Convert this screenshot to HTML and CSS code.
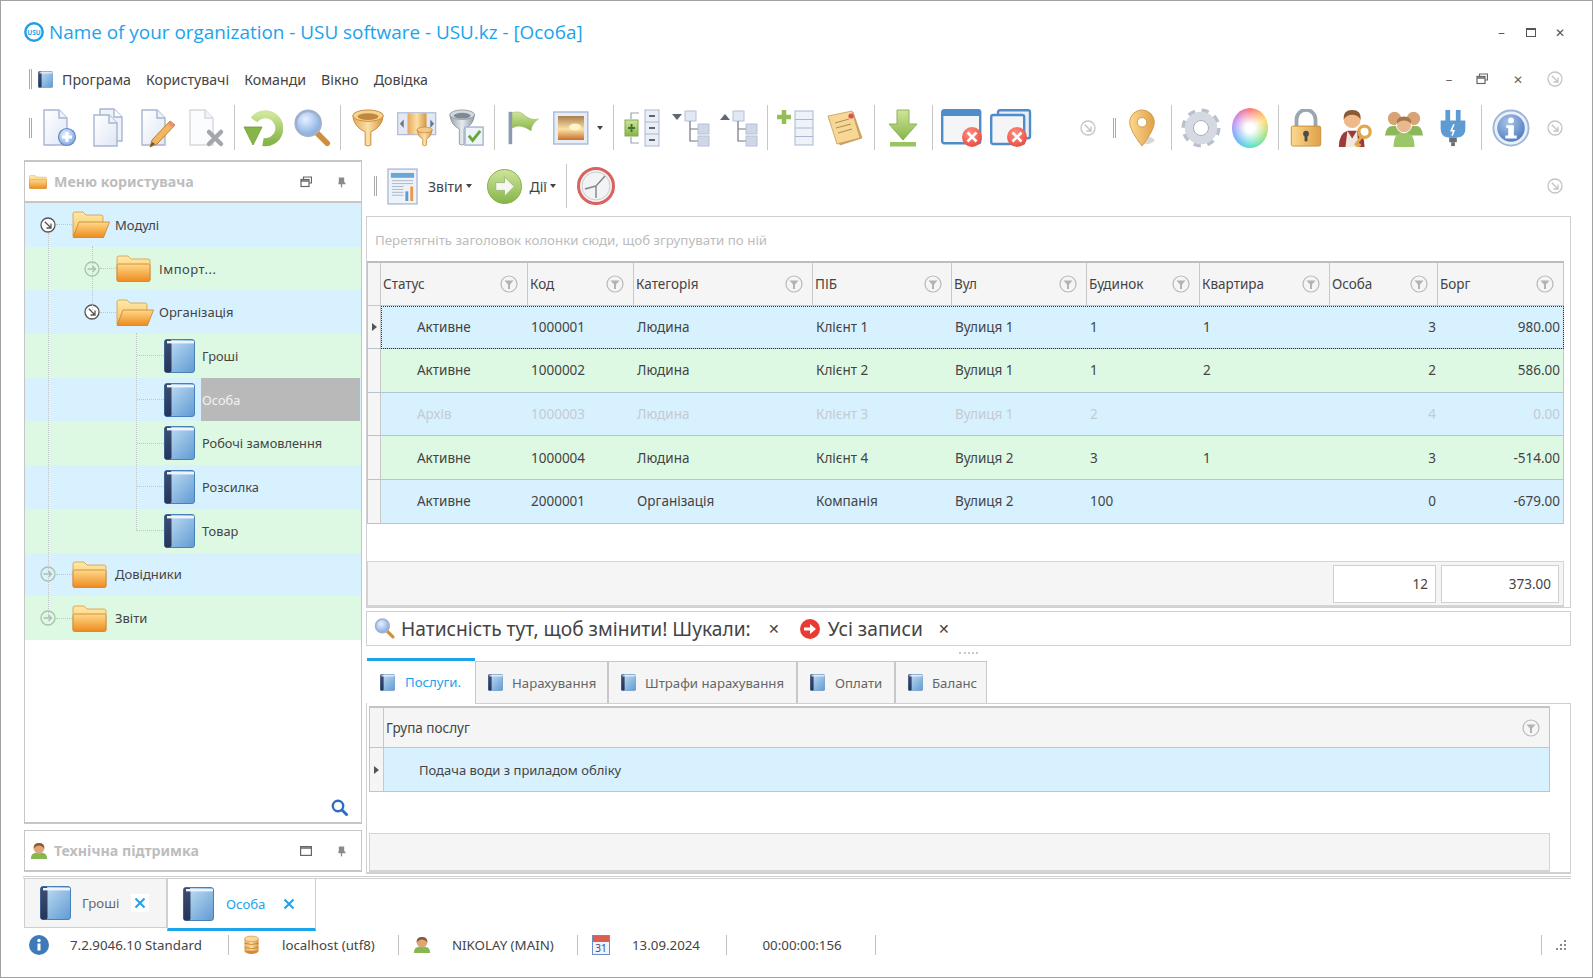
FILE: index.html
```html
<!DOCTYPE html>
<html lang="uk">
<head>
<meta charset="utf-8">
<title>USU</title>
<link rel="stylesheet" href="styles.css">
</head>
<body>
<svg class="sprite" xmlns="http://www.w3.org/2000/svg">
<defs>
<linearGradient id="gBook" x1="0" y1="0" x2="1" y2="1"><stop offset="0" stop-color="#c9e2f6"/><stop offset="1" stop-color="#5f9bd3"/></linearGradient>
<linearGradient id="gSpine" x1="0" y1="0" x2="0" y2="1"><stop offset="0" stop-color="#3e4f74"/><stop offset="1" stop-color="#26355a"/></linearGradient>
<linearGradient id="gFolderB" x1="0" y1="0" x2="0" y2="1"><stop offset="0" stop-color="#ffe9a8"/><stop offset="1" stop-color="#f5c15c"/></linearGradient>
<linearGradient id="gFolderF" x1="0" y1="0" x2="0" y2="1"><stop offset="0" stop-color="#ffd98a"/><stop offset="1" stop-color="#ee8b1d"/></linearGradient>
<linearGradient id="gPage" x1="0" y1="0" x2="1" y2="1"><stop offset="0" stop-color="#fff"/><stop offset="1" stop-color="#dfe7f4"/></linearGradient>
<linearGradient id="gGold" x1="0" y1="0" x2="1" y2="0"><stop offset="0" stop-color="#e6a95a"/><stop offset=".5" stop-color="#fbe0a6"/><stop offset="1" stop-color="#d8943f"/></linearGradient>
<linearGradient id="gGray" x1="0" y1="0" x2="1" y2="0"><stop offset="0" stop-color="#9aa4ad"/><stop offset=".5" stop-color="#e6eaee"/><stop offset="1" stop-color="#8f99a3"/></linearGradient>
<linearGradient id="gGreen" x1="0" y1="0" x2="0" y2="1"><stop offset="0" stop-color="#cfe59a"/><stop offset="1" stop-color="#86b548"/></linearGradient>
<linearGradient id="gSun" x1="0" y1="0" x2="0" y2="1"><stop offset="0" stop-color="#a97f4f"/><stop offset=".55" stop-color="#fbe2a6"/><stop offset="1" stop-color="#c8702a"/></linearGradient>
<radialGradient id="gLens" cx=".4" cy=".35" r=".7"><stop offset="0" stop-color="#e6f1ff"/><stop offset="1" stop-color="#7ea7e0"/></radialGradient>
<radialGradient id="gInfo" cx=".4" cy=".3" r=".8"><stop offset="0" stop-color="#a9c4ea"/><stop offset="1" stop-color="#4a76bd"/></radialGradient>
<radialGradient id="gRed" cx=".4" cy=".3" r=".8"><stop offset="0" stop-color="#ff8d80"/><stop offset="1" stop-color="#e6483a"/></radialGradient>
<linearGradient id="gPin" x1="0" y1="0" x2="1" y2="0"><stop offset="0" stop-color="#fbd98f"/><stop offset="1" stop-color="#e0a046"/></linearGradient>

<symbol id="book" viewBox="0 0 31 34"><rect x=".5" y=".5" width="30" height="33" rx="2.5" fill="url(#gBook)" stroke="#4a80b8"/><rect x=".5" y=".5" width="7" height="33" rx="2" fill="url(#gSpine)"/><rect x="3" y="2" width="27" height="2.4" fill="#eef4f9"/></symbol>
<symbol id="fopen" viewBox="0 0 38 27"><path d="M1 25V3q0-2 2-2h8l3 3h15q2 0 2 2v6H8z" fill="url(#gFolderB)" stroke="#d59a3f" stroke-width=".8"/><path d="M7 11h30.5l-6 15.5H1z" fill="url(#gFolderF)" stroke="#c9822c" stroke-width=".8"/></symbol>
<symbol id="fclosed" viewBox="0 0 35 27"><path d="M1 25V3q0-2 2-2h9l3 3h17q2 0 2 2v19z" fill="url(#gFolderB)" stroke="#d59a3f" stroke-width=".8"/><rect x="1" y="9" width="33" height="17.5" rx="1.5" fill="url(#gFolderF)" stroke="#c9822c" stroke-width=".8"/></symbol>
<symbol id="page" viewBox="0 0 40 40"><path d="M4 2h15l8 8v27H4z" fill="url(#gPage)" stroke="#a8b5d2" stroke-width="1.4"/><path d="M19 2v8h8" fill="#eef2f9" stroke="#a8b5d2" stroke-width="1.4"/></symbol>
<symbol id="docnew" viewBox="0 0 40 40"><use href="#page"/><circle cx="27" cy="29" r="8.5" fill="url(#gLens)" stroke="#5f88c6" stroke-width="1.2"/><path d="M27 24v10M22 29h10" stroke="#fff" stroke-width="3"/></symbol>
<symbol id="doccopy" viewBox="0 0 40 40"><path d="M11 1h14l8 8v24H11z" fill="#eef2f9" stroke="#a8b5d2" stroke-width="1.4"/><path d="M25 1v8h8" fill="#fff" stroke="#a8b5d2" stroke-width="1.4"/><path d="M5 7h15l8 8v23H5z" fill="url(#gPage)" stroke="#a8b5d2" stroke-width="1.4"/><path d="M20 7v8h8" fill="#eef2f9" stroke="#a8b5d2" stroke-width="1.4"/></symbol>
<symbol id="docedit" viewBox="0 0 40 40"><use href="#page"/><path d="M32 13l5 4-18 19-7 3 2-7z" fill="#f1b65f" stroke="#c47f2c"/><path d="M32 13l5 4-2 3-5-4z" fill="#e88e84"/><path d="M12 39l2-5 3 2z" fill="#555"/></symbol>
<symbol id="docdel" viewBox="0 0 40 40"><path d="M4 2h15l8 8v27H4z" fill="#fbfcfd" stroke="#d5d8dd" stroke-width="1.4"/><path d="M19 2v8h8" fill="#f3f4f6" stroke="#d5d8dd" stroke-width="1.4"/><path d="M23 24l12 12M35 24L23 36" stroke="#a3a6aa" stroke-width="4.5" stroke-linecap="round"/></symbol>
<symbol id="refresh" viewBox="0 0 40 40"><path d="M11 12A14 14 0 1 1 20 34" fill="none" stroke="url(#gGreen)" stroke-width="8"/><path d="M1 19h18L10 37z" fill="#86b548" stroke="#6b9b36" stroke-width=".8"/></symbol>
<symbol id="lens" viewBox="0 0 40 40"><path d="M25 25l11 11" stroke="#cf8f3d" stroke-width="6" stroke-linecap="round"/><circle cx="16" cy="15" r="13" fill="url(#gLens)" stroke="#9fb1cc" stroke-width="3"/></symbol>
<symbol id="funnel" viewBox="0 0 40 40"><path d="M4 7q1 12 13 17v14q3 2 6 0V24Q35 19 36 7z" fill="url(#gGold)" stroke="#c98a3a"/><ellipse cx="20" cy="7" rx="16" ry="6" fill="#f6d28f" stroke="#c98a3a"/><ellipse cx="20" cy="8" rx="11" ry="3.5" fill="#c2873f"/></symbol>
<symbol id="colfilter" viewBox="0 0 42 40"><rect x=".7" y="4" width="40" height="23" fill="#e3e9f4" stroke="#aab7d3" stroke-width="1.2"/><rect x="11" y="4.5" width="20" height="22" fill="url(#gGold)"/><path d="M7 11v9l-4-4.500zM35 11v9l4-4.500z" fill="#6b7488"/><path d="M21 22q1 7 6 10v6q2 1.500 4 0v-6q5-3 6-10z" fill="url(#gGold)" stroke="#c98a3a" stroke-width=".8"/><ellipse cx="29" cy="22" rx="8" ry="3" fill="#f3c98a" stroke="#c98a3a" stroke-width=".8"/></symbol>
<symbol id="gfunnel" viewBox="0 0 40 40"><path d="M3 6q1 11 10 15v16q3 2 5 0V21Q28 17 29 6z" fill="url(#gGray)" stroke="#828c96" stroke-width=".8"/><ellipse cx="16" cy="6" rx="13" ry="5" fill="#d5dade" stroke="#828c96" stroke-width=".8"/><ellipse cx="16" cy="7" rx="9" ry="3" fill="#7f8994"/><rect x="19" y="19" width="19" height="19" fill="#eef3fa" stroke="#9fb0cf" stroke-width="1.4"/><path d="M23 28l4 5 8-10" fill="none" stroke="#67a83a" stroke-width="3"/></symbol>
<symbol id="flag" viewBox="0 0 36 40"><rect x="2" y="2" width="4" height="36" fill="#8a9ab0"/><path d="M6 3q9-3 15 4 7 5 14 3-8 6-8 13-6-4-11-5-5-1-10 2z" fill="url(#gGreen)" stroke="#8db356" stroke-width=".6"/></symbol>
<symbol id="picture" viewBox="0 0 36 36"><rect x=".8" y="2" width="34" height="32" fill="#e7edf6" stroke="#aab7d3" stroke-width="1.4"/><rect x="5" y="6" width="26" height="24" fill="url(#gSun)"/><ellipse cx="22" cy="17" rx="6" ry="3.500" fill="#fff3c8"/></symbol>
<symbol id="treeadd" viewBox="0 0 38 38"><rect x="22" y="1" width="14" height="36" fill="#e9eef7" stroke="#aab7d3"/><path d="M22 13h14M22 25h14" stroke="#aab7d3"/><path d="M26 7h6M26 19h6M26 31h6" stroke="#60656e" stroke-width="1.8"/><path d="M16 4H8v6M16 34H8v-6" fill="none" stroke="#9ba3ad" stroke-width="1.2"/><rect x="2" y="11" width="13" height="16" fill="url(#gGreen)" stroke="#86aa4f"/><path d="M8.500 15v8M5 19h7" stroke="#46752a" stroke-width="2"/></symbol>
<symbol id="treecol" viewBox="0 0 38 38"><path d="M0 5h10l-5 6z" fill="#606672"/><rect x="13" y="2" width="11" height="10" fill="#e2e8f3" stroke="#b6c1d6"/><path d="M18 12v20h8M18 20h8" fill="none" stroke="#6f7580" stroke-width="1.2"/><rect x="26" y="15" width="11" height="10" fill="#cfd7e6" stroke="#b6c1d6"/><rect x="26" y="27" width="11" height="10" fill="#cfd7e6" stroke="#b6c1d6"/></symbol>
<symbol id="treeexp" viewBox="0 0 38 38"><path d="M0 11h10L5 5z" fill="#606672"/><rect x="13" y="2" width="11" height="10" fill="#e2e8f3" stroke="#b6c1d6"/><path d="M18 12v20h8M18 20h8" fill="none" stroke="#6f7580" stroke-width="1.2"/><rect x="26" y="15" width="11" height="10" fill="#cfd7e6" stroke="#b6c1d6"/><rect x="26" y="27" width="11" height="10" fill="#cfd7e6" stroke="#b6c1d6"/></symbol>
<symbol id="addrows" viewBox="0 0 38 38"><rect x="18" y="2" width="18" height="34" fill="#eef2f9" stroke="#aab7d3"/><path d="M18 10.500h18M18 19h18M18 27.500h18" stroke="#aab7d3"/><path d="M7 1v14M0 8h14" stroke="#94bc57" stroke-width="4.500"/></symbol>
<symbol id="note" viewBox="0 0 38 38"><path d="M3 10l24-7 9 26-22 7z" fill="#d9a65a" stroke="#b98a44" stroke-width=".6"/><path d="M2 7l24-5 8 27-23 6z" fill="#f6d796" stroke="#c79c58" stroke-width=".8"/><path d="M9 14l14-4M10 19l15-4M12 24l14-4" stroke="#b08a50" stroke-width="1"/><circle cx="25" cy="7" r="2.600" fill="#d9505a"/></symbol>
<symbol id="download" viewBox="0 0 30 38"><path d="M9 1h12v14h8L15 31 1 15h8z" fill="url(#gGreen)" stroke="#8eb15a"/><rect x="2" y="33" width="26" height="4.500" fill="#9cc361"/></symbol>
<symbol id="winx" viewBox="0 0 42 38"><rect x="1.200" y="1.200" width="38" height="33" rx="2" fill="#f4f5f7" stroke="#4f8cc9" stroke-width="2.400"/><rect x="1" y="1" width="38" height="6" fill="#4f8cc9"/><circle cx="31" cy="28" r="10" fill="url(#gRed)"/><path d="M26.500 23.500l9 9M35.500 23.500l-9 9" stroke="#fff" stroke-width="2.600"/></symbol>
<symbol id="winx2" viewBox="0 0 42 38"><rect x="8" y="1.200" width="32" height="28" rx="2" fill="#e9f0f7" stroke="#4f8cc9" stroke-width="2.400"/><rect x="1.200" y="6" width="33" height="29" rx="2" fill="#f4f5f7" stroke="#4f8cc9" stroke-width="2.400"/><circle cx="27" cy="28" r="10" fill="url(#gRed)"/><path d="M22.500 23.500l9 9M31.500 23.500l-9 9" stroke="#fff" stroke-width="2.600"/></symbol>
<symbol id="carrow" viewBox="0 0 16 16"><circle cx="8" cy="8" r="7" fill="#fff" stroke="currentColor" stroke-width="1.300"/><path d="M4.800 4.800l6 6M11 6.500V11H6.500" fill="none" stroke="currentColor" stroke-width="1.300"/></symbol>
<symbol id="cright" viewBox="0 0 16 16"><circle cx="8" cy="8" r="7" fill="none" stroke="currentColor" stroke-width="1.300"/><path d="M3.500 8h8M8.500 5l3 3-3 3" fill="none" stroke="currentColor" stroke-width="1.300"/></symbol>
<symbol id="mappin" viewBox="0 0 30 40"><ellipse cx="19" cy="33" rx="9" ry="4" fill="#d8d8d8"/><path d="M15 39Q2 22 2 14a13 13 0 0 1 26 0q0 8-13 25z" fill="url(#gPin)" stroke="#d39a4b"/><circle cx="15" cy="14" r="5" fill="#fff" stroke="#d39a4b"/></symbol>
<symbol id="gear" viewBox="0 0 38 40"><circle cx="19" cy="20" r="17" fill="none" stroke="#b9c1cd" stroke-width="5" stroke-dasharray="7 6.350"/><circle cx="19" cy="20" r="12" fill="none" stroke="#d5dae2" stroke-width="8.500"/><circle cx="19" cy="20" r="7.500" fill="#fff" stroke="#a4adba"/></symbol>
<symbol id="lock" viewBox="0 0 34 40"><path d="M7 19V11a10 10 0 0 1 20 0v8" fill="none" stroke="#9ca6b0" stroke-width="4"/><rect x="1.500" y="18" width="31" height="21" rx="2" fill="url(#gPin)" stroke="#c4903f"/><circle cx="17" cy="26" r="3" fill="#4b4b4b"/><rect x="15.500" y="26" width="3" height="8" fill="#4b4b4b"/></symbol>
<symbol id="userkey" viewBox="0 0 38 40"><path d="M2 40q0-14 9-17h10q8 3 8 17z" fill="#9c3b3b"/><path d="M11 23l5 8 5-8 2 17H9z" fill="#efe9e0"/><circle cx="16" cy="11" r="9" fill="#efb98a"/><path d="M7 11Q6 1 16 1t9 10q-3-5-9-5t-9 5z" fill="#8a5a33"/><circle cx="29" cy="24" r="6" fill="none" stroke="#e0a94e" stroke-width="3.500"/><path d="M26 29l-6 8 2 2 3-2" fill="none" stroke="#e0a94e" stroke-width="3"/></symbol>
<symbol id="users" viewBox="0 0 40 40"><path d="M0 28q1-10 8-10h4q6 0 7 10zM21 28q1-10 8-10h4q6 0 7 10z" fill="#8cb85a"/><circle cx="10" cy="10" r="7" fill="#d7a377"/><circle cx="30" cy="10" r="7" fill="#d7a377"/><path d="M9 40q0-14 8-15h6q8 1 8 15z" fill="#9cc66a"/><circle cx="20" cy="17" r="8" fill="#e8b98d" stroke="#fff"/><path d="M12 16q0-8 8-8t8 8q-3-4-8-4t-8 4z" fill="#a4764a"/></symbol>
<symbol id="person" viewBox="0 0 20 20"><path d="M1 19q0-7 6-7h6q6 0 6 7z" fill="#86b84f"/><circle cx="10" cy="7" r="6" fill="#dca678"/><path d="M4 7q0-6 6-6t6 6q-3-3-6-3T4 7z" fill="#8a5a33"/></symbol>
<symbol id="plug" viewBox="0 0 30 40"><rect x="7" y="1" width="5" height="13" fill="#5f9bd3"/><rect x="18" y="1" width="5" height="13" fill="#5f9bd3"/><path d="M2 12h26v9q0 8-8 9H10q-8-1-8-9z" fill="#5f9bd3"/><path d="M16 16l-3 7h3l-2 5" fill="none" stroke="#fff" stroke-width="1.600"/><rect x="11" y="30" width="8" height="5" fill="#6a6f76"/><rect x="13" y="35" width="4" height="4" fill="#6a6f76"/></symbol>
<symbol id="info" viewBox="0 0 40 40"><circle cx="20" cy="20" r="18.500" fill="#eaf0f8" stroke="#9db5d8" stroke-width="2"/><circle cx="20" cy="20" r="14.500" fill="url(#gInfo)"/><circle cx="20" cy="12" r="3" fill="#fff"/><path d="M15 17h8v11h3v3H14v-3h3v-8h-2z" fill="#fff"/></symbol>
<symbol id="infoflat" viewBox="0 0 20 20"><circle cx="10" cy="10" r="10" fill="#3f7ab8"/><circle cx="10" cy="5.500" r="1.700" fill="#fff"/><rect x="8.500" y="8.500" width="3" height="7" fill="#fff"/></symbol>
<symbol id="report" viewBox="0 0 32 38"><rect x="1" y="1" width="30" height="36" fill="#eef3fa" stroke="#a6b6d2" stroke-width="1.300"/><rect x="4" y="5" width="24" height="5" fill="#6aa6d8"/><path d="M5 13h22M5 16h22M5 19h12M5 22h12M5 25h12M5 28h12" stroke="#a8b5c9" stroke-width="1"/><rect x="19" y="24" width="3" height="10" fill="#5f9bd3"/><rect x="24" y="19" width="3" height="15" fill="#e89a4c"/></symbol>
<symbol id="go" viewBox="0 0 36 36"><circle cx="18" cy="18" r="17.500" fill="url(#gGreen)" stroke="#86ad4f"/><path d="M9 14h9V8l10 10-10 10v-6H9z" fill="#f6f7f0" stroke="#9fb87e"/></symbol>
<symbol id="clock" viewBox="0 0 38 38"><circle cx="19" cy="19" r="17.500" fill="#f2f3f5" stroke="#d9645f" stroke-width="3"/><circle cx="19" cy="19" r="14" fill="none" stroke="#c9ccd2"/><path d="M19 19L28 9M19 19L8 22M19 19v12" stroke="#7f858e" stroke-width="1.400" fill="none"/></symbol>
<symbol id="filter" viewBox="0 0 18 18"><circle cx="9" cy="9" r="8" fill="#f5f5f5" stroke="#b9b9b9" stroke-width="1.200"/><path d="M4.500 5.500h9L10 9.500V14H8V9.500z" fill="#b3b3b3"/></symbol>
<symbol id="restore" viewBox="0 0 12 12"><path d="M3.500 3V1h8v6H9" fill="none" stroke="#666" stroke-width="1.200"/><rect x="1" y="3.500" width="8" height="7" fill="none" stroke="#666" stroke-width="1.200"/><path d="M1 5h8" stroke="#666" stroke-width="1.500"/></symbol>
<symbol id="pushpin" viewBox="0 0 10 12"><path d="M2 1h6v5l1.500 1.500v1h-8v-1L2 6z" fill="#8a8a8a"/><rect x="4.300" y="8" width="1.400" height="4" fill="#8a8a8a"/></symbol>
<symbol id="maxwin" viewBox="0 0 12 10"><rect x=".6" y=".6" width="10.800" height="8.800" fill="none" stroke="#666" stroke-width="1.200"/><path d="M.6 2h10.800" stroke="#666" stroke-width="1.500"/></symbol>
<symbol id="searchsmall" viewBox="0 0 17 17"><circle cx="7" cy="7" r="5.200" fill="none" stroke="#2c6fc2" stroke-width="2.400"/><path d="M11 11l4.500 4.500" stroke="#2c6fc2" stroke-width="3" stroke-linecap="round"/></symbol>
<symbol id="xmark" viewBox="0 0 12 12"><path d="M1.500 1.500l9 9M10.500 1.500l-9 9" stroke="#1ba3ec" stroke-width="2"/></symbol>
<symbol id="redgo" viewBox="0 0 20 20"><circle cx="10" cy="10" r="10" fill="#ea3b32"/><path d="M4 8.500h6V5l6 5-6 5v-3.500H4z" fill="#fff"/></symbol>
<symbol id="db" viewBox="0 0 16 20"><ellipse cx="8" cy="16" rx="7.500" ry="3.500" fill="#d08c3c"/><rect x=".5" y="3.500" width="15" height="12.500" fill="url(#gGold)"/><path d="M.5 8q7.500 3 15 0M.5 12.500q7.500 3 15 0" stroke="#c78533" fill="none"/><ellipse cx="8" cy="3.500" rx="7.500" ry="3" fill="#f9d89b" stroke="#c78533" stroke-width=".6"/></symbol>
<symbol id="cal" viewBox="0 0 18 20"><rect x=".5" y=".5" width="17" height="19" fill="#f0f3fa" stroke="#6f8cc8"/><rect x="1" y="1" width="16" height="6" fill="#d9604f"/></symbol>
<symbol id="logo" viewBox="0 0 20 20"><circle cx="10" cy="10" r="8.700" fill="#fff" stroke="#1f9fe8" stroke-width="2.400"/></symbol>
</defs>
</svg>

<div class="window">
  <header class="titlebar">
    <span class="logo"><svg class="ic-20"><use href="#logo"/></svg><span class="logo-text">USU</span></span>
    <span class="title-text">Name of your organization - USU software - USU.kz - [Особа]</span>
    <span class="win-buttons">
      <span class="wb">–</span>
      <span class="wb wb-max"></span>
      <span class="wb wb-x">✕</span>
    </span>
  </header>

  <nav class="menubar">
    <span class="grip"></span>
    <svg class="menu-book"><use href="#book"/></svg>
    <span class="menu-item">Програма</span>
    <span class="menu-item">Користувачі</span>
    <span class="menu-item">Команди</span>
    <span class="menu-item">Вікно</span>
    <span class="menu-item">Довідка</span>
    <span class="mdi-buttons">
      <span class="mdi-min">–</span>
      <svg class="ic-12"><use href="#restore"/></svg>
      <span class="mdi-x">✕</span>
      <svg class="ic-16 c-light"><use href="#carrow"/></svg>
    </span>
  </nav>

  <div class="toolbar">
    <span class="grip grip-tb"></span>
    <span class="slot"><svg class="ic-40"><use href="#docnew"/></svg></span>
    <span class="slot"><svg class="ic-40"><use href="#doccopy"/></svg></span>
    <span class="slot"><svg class="ic-40"><use href="#docedit"/></svg></span>
    <span class="slot"><svg class="ic-40"><use href="#docdel"/></svg></span>
    <span class="sep"></span>
    <span class="slot"><svg class="ic-40"><use href="#refresh"/></svg></span>
    <span class="slot"><svg class="ic-38"><use href="#lens"/></svg></span>
    <span class="sep"></span>
    <span class="slot"><svg class="ic-38"><use href="#funnel"/></svg></span>
    <span class="slot"><svg class="ic-42"><use href="#colfilter"/></svg></span>
    <span class="slot"><svg class="ic-38"><use href="#gfunnel"/></svg></span>
    <span class="sep"></span>
    <span class="slot"><svg class="ic-36"><use href="#flag"/></svg></span>
    <span class="slot"><svg class="ic-36"><use href="#picture"/></svg></span>
    <span class="drop drop-tb"></span>
    <span class="sep"></span>
    <span class="slot"><svg class="ic-38"><use href="#treeadd"/></svg></span>
    <span class="slot"><svg class="ic-38"><use href="#treecol"/></svg></span>
    <span class="slot"><svg class="ic-38"><use href="#treeexp"/></svg></span>
    <span class="sep"></span>
    <span class="slot"><svg class="ic-38"><use href="#addrows"/></svg></span>
    <span class="slot"><svg class="ic-38"><use href="#note"/></svg></span>
    <span class="sep sep-w"></span>
    <span class="slot"><svg class="ic-38"><use href="#download"/></svg></span>
    <span class="sep sep-w"></span>
    <span class="slot"><svg class="ic-42"><use href="#winx"/></svg></span>
    <span class="slot"><svg class="ic-42"><use href="#winx2"/></svg></span>
    <svg class="ic-16 c-light tb-chevron"><use href="#carrow"/></svg>
    <span class="grip grip-tb grip-mid"></span>
    <span class="slot"><svg class="ic-38"><use href="#mappin"/></svg></span>
    <span class="sep sep-w"></span>
    <span class="slot"><svg class="ic-40"><use href="#gear"/></svg></span>
    <span class="slot"><span class="wheel"></span></span>
    <span class="sep"></span>
    <span class="slot"><svg class="ic-38"><use href="#lock"/></svg></span>
    <span class="slot"><svg class="ic-38"><use href="#userkey"/></svg></span>
    <span class="slot"><svg class="ic-38"><use href="#users"/></svg></span>
    <span class="slot"><svg class="ic-38"><use href="#plug"/></svg></span>
    <span class="sep sep-w"></span>
    <span class="slot"><svg class="ic-38"><use href="#info"/></svg></span>
    <svg class="ic-16 c-light tb-end"><use href="#carrow"/></svg>
  </div>

  <main class="main">
    <aside class="leftcol">
      <section class="panel panel-menu">
        <div class="panel-head">
          <svg class="ic-head"><use href="#fclosed"/></svg>
          <span class="panel-title">Меню користувача</span>
          <svg class="ic-12 ph-a"><use href="#restore"/></svg>
          <svg class="ic-pin ph-b"><use href="#pushpin"/></svg>
        </div>
        <div class="tree">
          <span class="vl vl-a"></span><span class="vl vl-b"></span><span class="vl vl-c"></span>
          <div class="tr blue"><svg class="ic-16 c-dark"><use href="#carrow"/></svg><span class="hl"></span><svg class="folder"><use href="#fopen"/></svg><span class="tt">Модулі</span></div>
          <div class="tr green l1"><svg class="ic-16 c-pale"><use href="#cright"/></svg><span class="hl"></span><svg class="folder f-closed"><use href="#fclosed"/></svg><span class="tt tt-spaced">Імпорт...</span></div>
          <div class="tr blue l1"><svg class="ic-16 c-dark"><use href="#carrow"/></svg><span class="hl"></span><svg class="folder"><use href="#fopen"/></svg><span class="tt">Організація</span></div>
          <div class="tr green l2"><span class="hl2"></span><svg class="bk"><use href="#book"/></svg><span class="tl">Гроші</span></div>
          <div class="tr blue l2"><span class="hl2"></span><svg class="bk"><use href="#book"/></svg><span class="tl selected">Особа</span></div>
          <div class="tr green l2"><span class="hl2"></span><svg class="bk"><use href="#book"/></svg><span class="tl">Робочі замовлення</span></div>
          <div class="tr blue l2"><span class="hl2"></span><svg class="bk"><use href="#book"/></svg><span class="tl">Розсилка</span></div>
          <div class="tr green l2"><span class="hl2"></span><svg class="bk"><use href="#book"/></svg><span class="tl">Товар</span></div>
          <div class="tr blue"><svg class="ic-16 c-pale"><use href="#cright"/></svg><span class="hl"></span><svg class="folder f-closed"><use href="#fclosed"/></svg><span class="tt">Довідники</span></div>
          <div class="tr green"><svg class="ic-16 c-pale"><use href="#cright"/></svg><span class="hl"></span><svg class="folder f-closed"><use href="#fclosed"/></svg><span class="tt">Звіти</span></div>
        </div>
        <div class="panel-foot"><svg class="ic-17"><use href="#searchsmall"/></svg></div>
      </section>
      <section class="panel panel-support">
        <svg class="ic-18"><use href="#person"/></svg>
        <span class="panel-title">Технічна підтримка</span>
        <svg class="ic-12 ph-a"><use href="#maxwin"/></svg>
        <svg class="ic-pin ph-b"><use href="#pushpin"/></svg>
      </section>
    </aside>

    <div class="rightcol">
      <div class="toolbar2">
        <span class="grip grip-t2"></span>
        <svg class="ic-report"><use href="#report"/></svg>
        <span class="t2-label t2-a">Звіти</span><span class="drop"></span>
        <svg class="ic-go"><use href="#go"/></svg>
        <span class="t2-label t2-b">Дії</span><span class="drop"></span>
        <span class="sep sep-t2"></span>
        <svg class="ic-clock"><use href="#clock"/></svg>
        <svg class="ic-16 c-light t2-end"><use href="#carrow"/></svg>
      </div>
      <div class="grouppanel">Перетягніть заголовок колонки сюди, щоб згрупувати по ній</div>
      <div class="gridwrap">
        <div class="grow ghead">
          <div class="gi"></div>
          <div class="hc">Статус<svg class="ic-fl"><use href="#filter"/></svg></div>
          <div class="hc">Код<svg class="ic-fl"><use href="#filter"/></svg></div>
          <div class="hc">Категорія<svg class="ic-fl"><use href="#filter"/></svg></div>
          <div class="hc">ПІБ<svg class="ic-fl"><use href="#filter"/></svg></div>
          <div class="hc">Вул<svg class="ic-fl"><use href="#filter"/></svg></div>
          <div class="hc">Будинок<svg class="ic-fl"><use href="#filter"/></svg></div>
          <div class="hc">Квартира<svg class="ic-fl"><use href="#filter"/></svg></div>
          <div class="hc">Особа<svg class="ic-fl"><use href="#filter"/></svg></div>
          <div class="hc">Борг<svg class="ic-fl"><use href="#filter"/></svg></div>
        </div>
        <div class="grow gr blue focused">
          <div class="gi"><span class="tri"></span></div>
          <div class="c c-st">Активне</div><div class="c c-code">1000001</div><div class="c">Людина</div><div class="c">Клієнт 1</div><div class="c">Вулиця 1</div><div class="c">1</div><div class="c">1</div><div class="c c-r1">3</div><div class="c c-r2">980.00</div>
        </div>
        <div class="grow gr green">
          <div class="gi"></div>
          <div class="c c-st">Активне</div><div class="c c-code">1000002</div><div class="c">Людина</div><div class="c">Клієнт 2</div><div class="c">Вулиця 1</div><div class="c">1</div><div class="c">2</div><div class="c c-r1">2</div><div class="c c-r2">586.00</div>
        </div>
        <div class="grow gr blue archived">
          <div class="gi"></div>
          <div class="c c-st">Архів</div><div class="c c-code">1000003</div><div class="c">Людина</div><div class="c">Клієнт 3</div><div class="c">Вулиця 1</div><div class="c">2</div><div class="c"></div><div class="c c-r1">4</div><div class="c c-r2">0.00</div>
        </div>
        <div class="grow gr green">
          <div class="gi"></div>
          <div class="c c-st">Активне</div><div class="c c-code">1000004</div><div class="c">Людина</div><div class="c">Клієнт 4</div><div class="c">Вулиця 2</div><div class="c">3</div><div class="c">1</div><div class="c c-r1">3</div><div class="c c-r2">-514.00</div>
        </div>
        <div class="grow gr blue">
          <div class="gi"></div>
          <div class="c c-st">Активне</div><div class="c c-code">2000001</div><div class="c">Організація</div><div class="c">Компанія</div><div class="c">Вулиця 2</div><div class="c">100</div><div class="c"></div><div class="c c-r1">0</div><div class="c c-r2">-679.00</div>
        </div>
        <div class="ggap"></div>
        <div class="gfoot">
          <span class="sumbox sb-a">12</span>
          <span class="sumbox sb-b">373.00</span>
        </div>
      </div>
      <div class="searchbar">
        <svg class="ic-search"><use href="#lens"/></svg>
        <span class="s-text">Натисність тут, щоб змінити! Шукали:</span>
        <span class="s-x s-x-a">✕</span>
        <svg class="ic-redgo"><use href="#redgo"/></svg>
        <span class="s-text s-text-b">Усі записи</span>
        <span class="s-x s-x-b">✕</span>
      </div>
      <div class="splitter"><span class="dots"></span></div>
      <div class="subtabs">
        <div class="stab active"><svg class="ic-tab"><use href="#book"/></svg>Послуги.</div>
        <div class="stab st-2"><svg class="ic-tab"><use href="#book"/></svg>Нарахування</div>
        <div class="stab st-3"><svg class="ic-tab"><use href="#book"/></svg>Штрафи нарахування</div>
        <div class="stab st-4"><svg class="ic-tab"><use href="#book"/></svg>Оплати</div>
        <div class="stab st-5"><svg class="ic-tab"><use href="#book"/></svg>Баланс</div>
      </div>
      <div class="subpanel">
        <div class="shead">
          <div class="gi"></div>
          <div class="hc hc-sub">Група послуг<svg class="ic-fl"><use href="#filter"/></svg></div>
        </div>
        <div class="srow blue">
          <div class="gi"><span class="tri"></span></div>
          <div class="c c-sub">Подача води з приладом обліку</div>
        </div>
        <div class="sgap"></div>
        <div class="sfoot"></div>
      </div>
    </div>
  </main>

  <div class="doctabs">
    <div class="dtab"><svg class="ic-dt"><use href="#book"/></svg><span class="dt-text">Гроші</span><span class="dt-x"><svg class="ic-x"><use href="#xmark"/></svg></span></div>
    <div class="dtab dtab-active"><svg class="ic-dt"><use href="#book"/></svg><span class="dt-text">Особа</span><span class="dt-x"><svg class="ic-x"><use href="#xmark"/></svg></span></div>
  </div>

  <footer class="status">
    <div class="st st-1"><svg class="ic-st20"><use href="#infoflat"/></svg><span>7.2.9046.10 Standard</span></div>
    <div class="st st-2a"><svg class="ic-db"><use href="#db"/></svg><span>localhost (utf8)</span></div>
    <div class="st st-3a"><svg class="ic-st18"><use href="#person"/></svg><span>NIKOLAY (MAIN)</span></div>
    <div class="st st-4a"><span class="cal"><svg class="ic-cal"><use href="#cal"/></svg><span class="cal-n">31</span></span><span>13.09.2024</span></div>
    <div class="st st-5a"><span>00:00:00:156</span></div>
    <div class="st-spacer"></div>
    <div class="st-grip"><span></span><span></span><span></span><span></span><span></span><span></span><span></span><span></span><span></span></div>
  </footer>
</div>
</body>
</html>
```

FILE: styles.css
```css
* { box-sizing: border-box; }
html, body { margin: 0; padding: 0; background: #fff; }
body { font-family: "Noto Sans", "Liberation Sans", sans-serif; font-size: 13.5px; color: #444; }
.sprite { display: block; width: 0; height: 0; }
svg { display: block; flex: none; }

.window { width: 1593px; height: 978px; border: 1px solid #a2a2a2; display: flex; flex-direction: column; overflow: hidden; background: #fff; }

/* title */
.titlebar { height: 62px; flex: none; display: flex; align-items: center; padding-left: 23px; }
.logo { width: 20px; height: 20px; display: grid; place-items: center; }
.logo > * { grid-area: 1 / 1; }
.logo-text { font-size: 6.5px; font-weight: 700; color: #1f9fe8; }
.ic-20 { width: 20px; height: 20px; }
.title-text { margin-left: 5px; font-family: "Open Sans", "Noto Sans", sans-serif; font-size: 18.9px; color: #1ba3ec; }
.win-buttons { margin-left: auto; display: flex; align-items: center; gap: 0; padding-right: 18px; }
.wb { width: 29px; text-align: center; color: #555; font-size: 13px; }
.wb-max { width: 10px; height: 9px; margin: 0 9.5px; border: 1px solid #555; border-top-width: 2px; }
.wb-x { font-size: 12px; }

/* menu */
.menubar { height: 32px; flex: none; display: flex; align-items: center; padding-left: 28px; }
.grip { width: 3px; height: 20px; border-left: 1px solid #aaa; border-right: 1px solid #aaa; flex: none; }
.menu-book { width: 15px; height: 17px; margin: 0 9px 0 6px; }
.menu-item { margin-right: 15px; font-size: 14.2px; color: #444; }
.mdi-buttons { margin-left: auto; display: flex; align-items: center; padding-right: 29px; }
.mdi-min { width: 12px; text-align: center; color: #666; font-size: 13px; }
.mdi-buttons .ic-12 { margin-left: 21px; }
.mdi-x { margin-left: 25px; margin-right: 24px; font-size: 12px; color: #666; }
.ic-12 { width: 12px; height: 12px; }
.ic-16 { width: 16px; height: 16px; }
.c-light { color: #c4c4c4; }
.c-dark { color: #555; }
.c-pale { color: #a9c0ac; }

/* toolbar */
.toolbar { height: 65px; flex: none; display: flex; align-items: center; padding-left: 28px; }
.grip-tb { margin-right: 4px; }
.slot { width: 48.7px; height: 46px; flex: none; display: flex; align-items: center; justify-content: center; }
.sep { width: 8px; height: 45px; flex: none; background: linear-gradient(#c6c6c6, #c6c6c6) center / 1px 100% no-repeat; }
.sep-w { width: 10px; }
.ic-36 { width: 36px; height: 36px; }
.ic-38 { width: 38px; height: 38px; }
.ic-40 { width: 40px; height: 40px; }
.ic-42 { width: 42px; height: 38px; }
.drop { width: 0; height: 0; flex: none; border: 3.5px solid transparent; border-top: 4px solid #444; border-bottom: 0; }
.drop-tb { width: 14px; margin: 0; border: 0; position: relative; height: 10px; }
.drop-tb::after { content: ""; position: absolute; left: 1px; top: 3px; border: 3.5px solid transparent; border-top: 4px solid #444; border-bottom: 0; }
.tb-chevron { margin-left: 45px; }
.grip-mid { margin-left: 17px; margin-right: 2px; }
.tb-end { margin-left: auto; margin-right: 29px; }
.wheel { width: 36px; height: 40px; border-radius: 50%; background: radial-gradient(circle, #fff 0 16%, rgba(255,255,255,0) 70%), conic-gradient(#ff7a7a, #ffd75e, #8fe07a, #5fe0d0, #6aa8ff, #c583f0, #ff7a7a); }

/* main */
.main { height: 716px; flex: none; display: flex; padding-left: 23px; }
.leftcol { width: 338px; flex: none; display: flex; flex-direction: column; gap: 6px; }
.panel { border: 1px solid #c6c6c6; background: #fff; }
.panel-menu { height: 664px; display: flex; flex-direction: column; border-width: 2px 1px 2px 1px; }
.panel-head { height: 41px; flex: none; display: flex; align-items: center; padding-left: 4px; border-bottom: 2px solid #c6c6c6; }
.ic-head { width: 18px; height: 14px; margin-right: 7px; }
.panel-title { font-size: 14.2px; font-weight: 700; color: #bdbdbd; flex: 1; white-space: nowrap; }
.ph-a { margin-right: 25px; }
.ic-pin { width: 9px; height: 12px; }
.ph-b { margin-right: 15px; }
.panel-support { height: 42px; display: flex; align-items: center; padding-left: 5px; border-bottom-width: 2px; }
.ic-18 { width: 18px; height: 18px; margin-right: 6px; }

.tree { position: relative; flex: none; }
.tr { height: 43.7px; display: flex; align-items: center; padding-left: 15px; }
.tr.l1 { padding-left: 59px; }
.tr.l2 { padding-left: 112px; }
.blue { background: #d8f1ff; }
.green { background: #def9e3; }
.hl { width: 16px; height: 0; border-top: 1px dotted #bfc7c9; flex: none; }
.hl2 { width: 27px; height: 0; border-top: 1px dotted #bfc7c9; flex: none; }
.folder { width: 38px; height: 27px; }
.f-closed { width: 35px; margin-right: 3px; }
.tt { margin-left: 5px; font-size: 13px; color: #444; white-space: nowrap; }
.tt-spaced { letter-spacing: .5px; }
.bk { width: 31px; height: 34px; }
.tl { align-self: stretch; flex: 1; margin: 0 1px 0 6px; padding-left: 1px; display: flex; align-items: center; font-size: 12.8px; color: #444; white-space: nowrap; }
.tl.selected { background: #b9b9b9; color: #f2f2f2; }
.vl { position: absolute; width: 0; border-left: 1px dotted #bfc7c9; }
.vl-a { left: 23px; top: 30px; height: 386px; }
.vl-b { left: 67px; top: 43px; height: 66px; }
.vl-c { left: 111px; top: 130px; height: 198px; }
.panel-foot { margin-top: auto; display: flex; justify-content: flex-end; padding: 0 13px 6px 0; }
.ic-17 { width: 17px; height: 17px; }

/* right */
.rightcol { width: 1205px; flex: none; margin-left: 4px; display: flex; flex-direction: column; }
.toolbar2 { height: 56px; flex: none; display: flex; align-items: center; padding: 0 0 4px 8px; }
.grip-t2 { margin-right: 10px; }
.ic-report { width: 31px; height: 37px; margin-right: 10px; }
.t2-label { font-size: 14px; color: #444; margin-right: 3px; }
.t2-a { width: 34.5px; }
.toolbar2 .drop { margin-right: 15px; }
.ic-go { width: 35px; height: 35px; margin-right: 8px; }
.t2-b { margin-right: 3px; }
.sep-t2 { height: 44px; width: 2px; margin: 0 9px 0 0; }
.toolbar2 .t2-b + .drop { margin-right: 10px; }
.ic-clock { width: 38px; height: 38px; }
.t2-end { margin-left: auto; margin-right: 8px; }

.grouppanel { height: 45px; flex: none; border: 1px solid #d0d0d0; border-bottom: 0; padding: 2px 0 0 8px; display: flex; align-items: center; color: #bcbcbc; font-size: 13.3px; }
.gridwrap { height: 347px; flex: none; border-left: 1px solid #d0d0d0; border-right: 1px solid #d0d0d0; border-bottom: 1px solid #d0d0d0; padding: 0 6px 0 0; display: flex; flex-direction: column; }
.grow { display: grid; grid-template-columns: 13px 147px 106px 179px 139px 135px 113px 130px 108px 125px; }
.ghead { height: 44.5px; flex: none; background: #f5f5f5; border-top: 2px solid #bdbdbd; border-bottom: 1px solid #c8c8c8; border-left: 1px solid #c4c4c4; border-right: 1px solid #c4c4c4; }
.gi { background: #f5f5f5; border-right: 1px solid #c8c8c8; display: flex; align-items: center; justify-content: center; }
.hc { display: flex; align-items: center; justify-content: space-between; padding: 0 9px 0 2px; border-right: 1px solid #c8c8c8; font-size: 13.5px; color: #444; }
.hc:last-child { border-right: 0; padding-right: 9px; }
.ic-fl { width: 18px; height: 18px; }
.gr { height: 43.65px; flex: none; border-left: 1px solid #c4c4c4; border-right: 1px solid #c4c4c4; border-bottom: 1px solid #b4c6ce; position: relative; }
.focused::after { content: ""; position: absolute; left: 13px; right: -1px; top: 0; bottom: -1px; border: 1px dotted #333; pointer-events: none; }
.c { display: flex; align-items: center; padding-left: 3px; font-size: 13.5px; color: #444; white-space: nowrap; }
.c-st { padding-left: 36px; }
.c-code { padding-left: 3px; }
.c-r1 { justify-content: flex-end; padding-right: 2px; }
.c-r2 { justify-content: flex-end; padding-right: 3px; }
.archived .c { color: #c4cbd0; }
.tri { width: 0; height: 0; border: 4px solid transparent; border-left: 5px solid #555; border-right: 0; }
.ggap { height: 37.5px; flex: none; }
.gfoot { height: 46px; flex: none; background: #f5f5f5; border: 1px solid #d4d4d4; border-bottom-width: 2px; display: flex; justify-content: flex-end; align-items: center; gap: 5px; padding-right: 4px; }
.sumbox { height: 38px; background: #fff; border: 1px solid #cfcfcf; display: flex; align-items: center; justify-content: flex-end; font-size: 13.5px; padding-right: 7px; }
.sb-a { width: 103px; }
.sb-b { width: 118px; }

.searchbar { height: 35px; flex: none; margin-top: 3px; border: 1px solid #d0d0d0; display: flex; align-items: center; padding-left: 7px; }
.ic-search { width: 21px; height: 21px; margin-right: 6px; }
.s-text { font-size: 19.2px; color: #444; white-space: nowrap; }
.s-x { font-size: 14px; color: #444; }
.s-x-a { margin-left: 17px; margin-right: 20px; }
.ic-redgo { width: 20px; height: 20px; margin-right: 8px; }
.s-x-b { margin-left: 15px; }
.splitter { height: 12px; flex: none; display: flex; align-items: center; padding: 2px 0 0 593px; }
.dots { width: 19px; border-top: 2px dotted #c8c8c8; }

.subtabs { height: 45px; flex: none; display: flex; align-items: flex-end; padding-left: 1px; }
.stab { height: 42px; display: flex; align-items: center; font-size: 13.2px; color: #666; background: #f5f5f5; border: 1px solid #c8c8c8; border-bottom: 0; white-space: nowrap; }
.ic-tab { width: 15px; height: 17px; }
.stab.active { width: 108px; height: 45px; background: #fff; color: #1ba3ec; border: 0; border-top: 3px solid #1ba3ec; padding-left: 13px; gap: 10px; }
.st-2 { width: 133px; padding-left: 12px; gap: 9px; }
.st-3 { width: 189px; padding-left: 12px; gap: 9px; }
.st-4 { width: 98px; padding-left: 12px; gap: 10px; }
.st-5 { width: 92px; padding-left: 12px; gap: 9px; }
.subpanel { height: 171px; flex: none; border: 1px solid #d0d0d0; border-width: 0 1px 2px 1px; padding: 3px 20px 0 2px; display: flex; flex-direction: column; position: relative; }
.subpanel::before { content: ""; position: absolute; left: 108px; right: -1px; top: 0; border-top: 1px solid #d0d0d0; }
.shead { height: 42px; flex: none; display: grid; grid-template-columns: 14px 1fr; background: #f5f5f5; border: 1px solid #c4c4c4; border-top-width: 2px; }
.srow { height: 44px; flex: none; display: grid; grid-template-columns: 14px 1fr; border: 1px solid #c4c4c4; border-top: 0; }
.hc-sub { padding-right: 10px; border-right: 0; }
.c-sub { padding-left: 35px; font-size: 13px; }
.sgap { height: 41px; flex: none; }
.sfoot { height: 39px; flex: none; background: #f5f5f5; border: 1px solid #d4d4d4; border-bottom-width: 2px; }

/* doc tabs */
.doctabs { height: 56px; flex: none; margin-left: 22px; border-top: 3px double #cfcfcf; display: flex; align-items: flex-start; margin-right: 21px; }
.dtab { width: 143px; height: 49px; margin-left: 1px; background: #f5f5f5; border: 1px solid #cfcfcf; border-top: 0; display: flex; align-items: center; padding-left: 15px; font-size: 13.2px; color: #666; }
.dtab-active { width: 149px; height: 52px; margin-left: 0; background: #fff; color: #1ba3ec; border-bottom: 3px solid #1ba3ec; padding-left: 15px; }
.ic-dt { width: 31px; height: 34px; }
.dt-text { margin-left: 11px; width: 49px; }
.dtab-active .dt-text { width: 54px; margin-left: 12px; }
.dt-x { width: 18px; height: 18px; background: #fff; display: flex; align-items: center; justify-content: center; }
.ic-x { width: 12px; height: 12px; }

/* status */
.status { height: 26px; flex: none; display: grid; grid-template-columns: 228px 170px 179px 148.5px 149.5px 1fr 50px; align-items: center; font-size: 13.3px; color: #444; }
.st { height: 20px; display: flex; align-items: center; border-right: 1px solid #c0c0c0; white-space: nowrap; }
.st-1 { padding-left: 28px; }
.st-1 span { margin-left: 21px; }
.ic-st20 { width: 20px; height: 20px; }
.st-2a { padding-left: 15px; }
.ic-db { width: 15px; height: 20px; }
.st-2a span:last-child { margin-left: 23px; }
.st-3a { padding-left: 14px; }
.ic-st18 { width: 18px; height: 18px; }
.st-3a span { margin-left: 21px; }
.st-4a { padding-left: 14px; }
.cal { width: 18px; height: 20px; display: grid; place-items: center; }
.cal > * { grid-area: 1 / 1; }
.ic-cal { width: 18px; height: 20px; }
.cal-n { font-size: 10px; color: #33508a; padding-top: 5px; }
.st-4a > span:last-child { margin-left: 22px; }
.st-5a { padding-left: 36px; }
.st-spacer { height: 20px; border-right: 1px solid #c0c0c0; }
.st-grip { display: grid; grid-template-columns: repeat(3, 2px); gap: 2px; margin-left: 14px; justify-content: start; }
.st-grip span { width: 2px; height: 2px; background: #8a8a8a; }
.st-grip span:nth-child(1), .st-grip span:nth-child(2), .st-grip span:nth-child(4) { visibility: hidden; }
```
